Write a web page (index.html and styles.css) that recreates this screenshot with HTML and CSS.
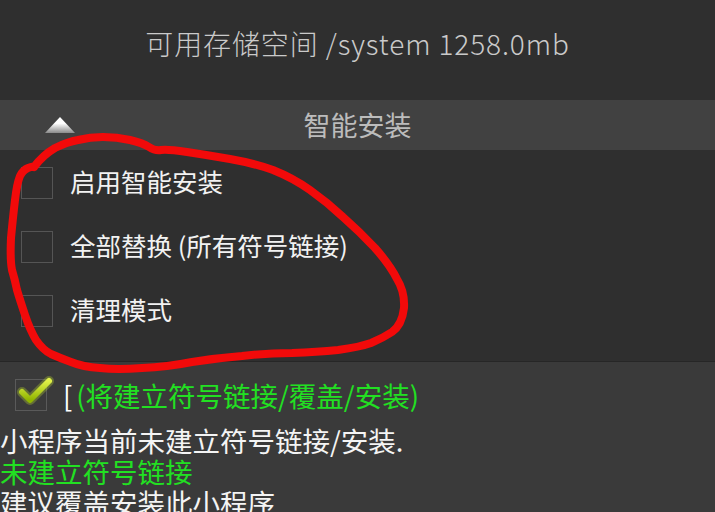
FILE: index.html
```html
<!DOCTYPE html>
<html>
<head>
    <meta charset="UTF-8">
    <title>智能安装</title>

    <link rel="stylesheet" href="styles.css">
</head>
<body>
    <div class="storage">可用存储空间 /system 1258.0mb</div>

    <div class="section-head">
        <span class="arrow"></span>
        <span class="head-title">智能安装</span>
    </div>

    <div class="options">
        <div class="option">
            <span class="box"></span>
            <span class="label">启用智能安装</span>
        </div>
        <div class="option">
            <span class="box"></span>
            <span class="label">全部替换 (所有符号链接)</span>
        </div>
        <div class="option">
            <span class="box"></span>
            <span class="label">清理模式</span>
        </div>
    </div>

    <div class="status">
        <div class="status-row">
            <span class="box checked">
                <svg width="32" height="32" viewBox="0 0 32 32">
                    <defs>
                        <linearGradient id="tick" x1="0" y1="0" x2="0" y2="1">
                            <stop offset="0%" stop-color="#e0f048"></stop>
                            <stop offset="100%" stop-color="#90b400"></stop>
                        </linearGradient>
                    </defs>
                    <polyline points="5,14 13,22 32,3" fill="none" stroke="#c8e830" stroke-opacity="0.3" stroke-width="10" stroke-linecap="round" stroke-linejoin="round"></polyline>
                    <polyline points="5,14 13,22 32,3" fill="none" stroke="url(#tick)" stroke-width="6" stroke-linecap="round" stroke-linejoin="round"></polyline>
                </svg>
            </span>
            <span class="bracket">[</span>
            <span class="green">(将建立符号链接/覆盖/安装)</span>
        </div>
        <div class="msg">小程序当前未建立符号链接/安装.</div>
        <div class="msg green">未建立符号链接</div>
        <div class="msg">建议覆盖安装此小程序</div>
    </div>

    <svg class="scribble" width="715" height="512">
        <path d="M 34,167 Q 43,155 55,148 Q 67,142 78,140 Q 90,137 103,137 Q 117,137 130,140 Q 143,143 149,147 Q 155,151 161,150 Q 167,149 187,152 Q 207,155 230,159 Q 253,163 273,170 Q 293,178 310,190 Q 327,202 343,217 Q 360,232 375,248 Q 390,265 397,279 Q 405,292 404,308 Q 402,325 392,332 Q 383,338 371,343 Q 360,347 338,350 Q 317,352 292,353 Q 267,353 242,356 Q 217,358 192,362 Q 167,367 142,368 Q 117,370 100,368 Q 83,367 71,362 Q 60,358 51,354 Q 43,350 36,340 Q 30,330 25,315 Q 20,300 17,290 Q 15,280 12,270 Q 10,260 11,238 Q 13,217 15,200 Q 17,183 20,176 Q 23,170 28,168 Q 34,166 34,167"></path>
    </svg>
</body>
</html>
```

FILE: styles.css
```css
html, body {
    margin: 0;
    padding: 0;
}

body {
    width: 715px;
    height: 512px;
    overflow: hidden;
    position: relative;

    background-color: #3a3a3a;
    font-family: "Noto Sans CJK SC", "Noto Sans", sans-serif;
}

.storage {
    height: 100px;
    line-height: 86px;

    background-color: #2f2f2f;
    color: #cacaca;
    font-size: 28px;
    font-weight: 300;
    letter-spacing: 0.9px;
    text-align: center;
}

.section-head {
    height: 50px;
    display: flex;
    align-items: center;
    justify-content: center;
    position: relative;

    background-color: #414141;
}

.head-title {
    color: #bcbcbc;
    font-size: 27px;
    line-height: 46px;
}

.arrow {
    position: absolute;
    left: 45px;
    top: 17px;
    width: 30px;
    height: 16px;

    background: linear-gradient(#ffffff 40%, #8a8a8a);
    clip-path: polygon(50% 0, 100% 100%, 0 100%);
}

.options {
    padding: 1px 0 18px;

    background-color: #2f2f2f;
    border-bottom: 1px solid #262626;
}

.option {
    height: 64px;
    display: flex;
    align-items: center;
    gap: 17px;
    padding-left: 21px;
}

.box {
    width: 30px;
    height: 30px;
    flex: none;

    border: 1px solid #555;
}

.label {
    color: #f2f2f2;
    font-size: 25.5px;
    line-height: 28px;
    padding-bottom: 4px;
}

.status {
    padding-top: 17px;

    color: #f4f4f4;
}

.status-row {
    height: 32px;
    display: flex;
    align-items: center;
    padding-left: 15px;
    margin-bottom: 14px;

    font-size: 27.5px;
}

.box.checked {
    position: relative;
    border-color: #5a5a5a;
}

.box.checked svg {
    position: absolute;
    left: 1px;
    top: -2px;
    overflow: visible;
}

.bracket {
    margin-left: 16px;
    margin-right: 4px;
    color: #ffffff;
}

.green {
    color: #22e022;
}

.msg {
    font-size: 27.5px;
    line-height: 31px;
    white-space: nowrap;
}

.scribble {
    position: absolute;
    left: 0;
    top: 0;
    pointer-events: none;
}

.scribble path {
    fill: none;
    stroke: #f20a0a;
    stroke-width: 8;
    stroke-linecap: round;
    stroke-linejoin: round;
}
```
